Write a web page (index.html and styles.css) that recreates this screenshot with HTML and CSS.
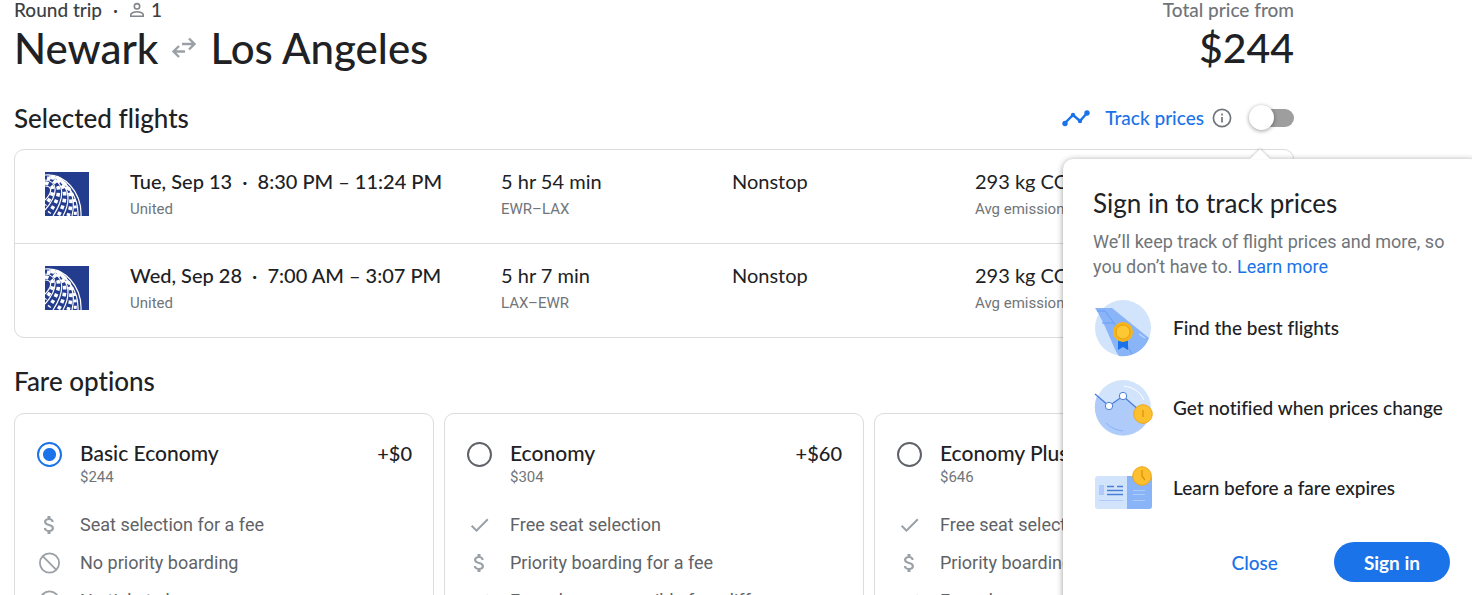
FILE: index.html
```
<!DOCTYPE html>
<html lang="en">
<head>
  <meta charset="UTF-8">
  <title>Newark to Los Angeles</title>
  <link rel="stylesheet" href="styles.css">
</head>
<body>

<!-- shared icons -->
<svg class="sprite" aria-hidden="true">
  <symbol id="dollar" viewBox="0 0 24 24"><path d="M11.8 10.9c-2.27-.59-3-1.2-3-2.15 0-1.09 1.01-1.85 2.7-1.85 1.78 0 2.44.85 2.5 2.1h2.21c-.07-1.72-1.12-3.3-3.21-3.81V3h-3v2.16c-1.94.42-3.5 1.68-3.5 3.61 0 2.31 1.91 3.46 4.7 4.13 2.5.6 3 1.48 3 2.41 0 .69-.49 1.79-2.7 1.79-2.06 0-2.87-.92-2.98-2.1h-2.2c.12 2.19 1.76 3.42 3.68 3.83V21h3v-2.15c1.95-.37 3.5-1.5 3.5-3.55 0-2.84-2.43-3.81-4.7-4.4z"/></symbol>
  <symbol id="check" viewBox="0 0 24 24"><path d="M9 16.17L4.83 12l-1.42 1.41L9 19 21 7l-1.41-1.41z"/></symbol>
  <symbol id="block" viewBox="0 0 24 24"><path d="M5.200 5.200l13.600 13.600M21.600 12a9.600 9.600 0 1 1-19.200 0 9.600 9.600 0 0 1 19.200 0z" fill="none" stroke="#9aa0a6" stroke-width="1.8"/></symbol>
  <symbol id="united" viewBox="0 0 44 44">
    <rect width="44" height="44" fill="#233c8e"/>
    <g fill="none" stroke="#fff" stroke-width="1.2">
      <path d="M0 3C19 1 37 20 36 44"/>
      <path d="M6 4C22 9 34 25 33 44"/>
      <path d="M13 5C26 14 31 27 27 44"/>
      <path d="M8 4C22 11 28 25 18 44"/>
      <path d="M4 4C18 9 22 23 8 44"/>
      <path d="M0 8C13 9 14 22 0 38"/>
      <path d="M0 14C7 14 8 20 0 28"/>
    </g>
    <g fill="none" stroke="#fff" stroke-width="3.600" stroke-dasharray="3.600 3.400">
      <path d="M0 11C10 12 11 21 0 33"/>
      <path d="M2 6C16 9 18 22 4 41"/>
      <path d="M6 5C20 10 25 24 13 44"/>
      <path d="M11 5C24 13 30 26 23 44"/>
    </g>
    <path d="M14 7C26 15 32 28 30 44" fill="none" stroke="#fff" stroke-width="3" stroke-dasharray="3 3.400"/>
  </symbol>
</svg>

<main class="page">

  <header class="trip">
    <div>
      <p class="trip-type">Round trip <span class="dot">·</span>
        <svg class="person" viewBox="0 0 16 16" fill="none" stroke="#80868b" stroke-width="1.6"><circle cx="8" cy="4.3" r="2.7"/><path d="M1.8 14.2v-1.6c0-1.9 4-2.9 6.2-2.9s6.2 1 6.2 2.9v1.6z"/></svg>
        <span>1</span></p>
      <h1>Newark
        <svg class="arrows" viewBox="0 0 26 22" fill="none" stroke="#9aa0a6" stroke-width="2.400"><path d="M11 7h13M18 1.500l5.500 5.500-5.500 5.500M14 14.500H2M8 9l-5.500 5.500L8 20"/></svg>
        Los Angeles</h1>
    </div>
    <div class="total">
      <p>Total price from</p>
      <strong>$244</strong>
    </div>
  </header>

  <div class="section-head">
    <h2>Selected flights</h2>
    <div class="track">
      <svg class="trend" viewBox="0 0 28 18" fill="none" stroke="#1a73e8" stroke-width="2.4"><path d="M3 14l8-8 7 6 7-8"/><g fill="#1a73e8" stroke="none"><circle cx="3" cy="14.5" r="2.7"/><circle cx="11" cy="6" r="2.2"/><circle cx="18" cy="12" r="2.2"/><circle cx="25" cy="4" r="2.7"/></g></svg>
      <label for="track">Track prices</label>
      <svg class="info" viewBox="0 0 20 20" fill="none" stroke="#70757a" stroke-width="1.7"><circle cx="10" cy="10" r="8.6"/><path d="M10 9v5.4M10 5.6v1.8"/></svg>
      <input type="checkbox" id="track" class="switch">

      <div class="popup" role="dialog" aria-labelledby="popup-title">
        <h3 id="popup-title">Sign in to track prices</h3>
        <p class="popup-text">We’ll keep track of flight prices and more, so you don’t have to. <a href="#">Learn more</a></p>
        <ul class="perks">
          <li>
            <svg viewBox="0 0 60 60">
              <circle cx="30" cy="30" r="28" fill="#d2e3fc"/>
              <path d="M2 10h17l37 30a28 28 0 0 1-30 18C21 52 14 29 2 10z" fill="#8ab4f8"/>
              <path d="M4 13h8l9 12H9M21 25l18 31" fill="none" stroke="#669df6"/>
              <path d="M46 36l6 4" stroke="#d2e3fc"/>
              <path d="M25 41h10v11l-5-3-5 3z" fill="#1a73e8"/>
              <circle cx="30" cy="34" r="10" fill="#f5b51e"/><circle cx="30" cy="34" r="7" fill="#fcc934" stroke="#ea9f10"/>
            </svg>
            Find the best flights
          </li>
          <li>
            <svg viewBox="0 0 60 60">
              <circle cx="30" cy="30" r="28" fill="#d2e3fc"/>
              <path d="M4 18l12 10 14-10 26 22A28 28 0 1 1 4 18z" fill="#aecbfa"/>
              <path d="M31 8q15 2 20 14" fill="none" stroke="#fff"/><path d="M13 45q7 7 17 8" fill="none" stroke="#8ab4f8"/>
              <path d="M2 16l14 12 14-10 17 15" fill="none" stroke="#4a7fd6" stroke-width="1.3"/>
              <circle cx="16" cy="28" r="3.7" fill="#fff" stroke="#4a7fd6"/><circle cx="30" cy="18" r="3.7" fill="#fff" stroke="#4a7fd6"/>
              <circle cx="50" cy="36" r="9.3" fill="#fcc02e" stroke="#eda51a"/><path d="M50 32v7" stroke="#e58f0b" stroke-width="1.3"/>
            </svg>
            Get notified when prices change
          </li>
          <li>
            <svg viewBox="0 0 60 60">
              <rect x="2" y="18" width="57" height="33" rx="3" fill="#d2e3fc"/>
              <path d="M34 18h22a3 3 0 0 1 3 3v27a3 3 0 0 1-3 3H34z" fill="#8ab4f8"/>
              <path d="M6 27h5v10H6z" fill="#aecbfa"/>
              <path d="M14 28.500h7M24 28.500h6M14 32.500h16M14 36.500h16" stroke="#4a7fd6" stroke-width="1.3"/>
              <path d="M6 42.500h24M40 32.500h12M40 36.500h12M40 42.500h12" stroke="#aecbfa"/>
              <circle cx="49" cy="18" r="9.300" fill="#fcc02e" stroke="#eda51a"/><path d="M49 12v6l3 4" fill="none" stroke="#e58f0b" stroke-width="1.3"/>
            </svg>
            Learn before a fare expires
          </li>
        </ul>
        <div class="popup-actions">
          <button type="button" class="btn-close">Close</button>
          <button type="button" class="btn-signin">Sign in</button>
        </div>
      </div>
    </div>
  </div>

  <section class="flights">
    <article class="flight">
      <svg class="logo" role="img" aria-label="United"><use href="#united"/></svg>
      <div><p class="main">Tue, Sep 13 <span class="dot">·</span> 8:30 PM – 11:24 PM</p><p class="sub">United</p></div>
      <div><p>5 hr 54 min</p><p class="sub">EWR–LAX</p></div>
      <div><p>Nonstop</p></div>
      <div><p>293 kg CO2</p><p class="sub">Avg emissions</p></div>
    </article>
    <article class="flight">
      <svg class="logo" role="img" aria-label="United"><use href="#united"/></svg>
      <div><p class="main">Wed, Sep 28 <span class="dot">·</span> 7:00 AM – 3:07 PM</p><p class="sub">United</p></div>
      <div><p>5 hr 7 min</p><p class="sub">LAX–EWR</p></div>
      <div><p>Nonstop</p></div>
      <div><p>293 kg CO2</p><p class="sub">Avg emissions</p></div>
    </article>
  </section>

  <h2 class="fares-title">Fare options</h2>

  <section class="fares">
    <article class="fare">
      <div class="fare-head">
        <input type="radio" name="fare" id="basic" checked>
        <div><label for="basic">Basic Economy</label><p class="sub">$244</p></div>
        <span class="extra">+$0</span>
      </div>
      <ul class="features">
        <li><svg><use href="#dollar"/></svg>Seat selection for a fee</li>
        <li><svg><use href="#block"/></svg>No priority boarding</li>
        <li><svg><use href="#block"/></svg>No ticket changes</li>
      </ul>
    </article>
    <article class="fare">
      <div class="fare-head">
        <input type="radio" name="fare" id="economy">
        <div><label for="economy">Economy</label><p class="sub">$304</p></div>
        <span class="extra">+$60</span>
      </div>
      <ul class="features">
        <li><svg><use href="#check"/></svg>Free seat selection</li>
        <li><svg><use href="#dollar"/></svg>Priority boarding for a fee</li>
        <li><svg><use href="#check"/></svg>Free change, possible fare difference</li>
      </ul>
    </article>
    <article class="fare">
      <div class="fare-head">
        <input type="radio" name="fare" id="plus">
        <div><label for="plus">Economy Plus</label><p class="sub">$646</p></div>
        <span class="extra">+$402</span>
      </div>
      <ul class="features">
        <li><svg><use href="#check"/></svg>Free seat selection</li>
        <li><svg><use href="#dollar"/></svg>Priority boarding for a fee</li>
        <li><svg><use href="#check"/></svg>Free change, possible fare difference</li>
      </ul>
    </article>
  </section>

</main>
</body>
</html>
```
FILE: styles.css
```
* {
  box-sizing: border-box;
}

html {
  overflow: hidden;
}

body {
  margin: 0;
  background: #fff;
  color: #202124;
  font-family: Lato, "Open Sans", sans-serif;
  font-size: 20px;
  line-height: 24px;
  font-variant-ligatures: none;
}

h1, h2, h3, p, ul {
  margin: 0;
  padding: 0;
  font-weight: 500;
}

ul {
  list-style: none;
}

.sprite {
  display: none;
}

.page {
  max-width: 1294px;
  padding-left: 14px;
}

/* Trip title and price */
.trip {
  display: flex;
  justify-content: space-between;
}

.trip-type {
  display: flex;
  align-items: center;
  gap: 6px;
  font-size: 19px;
  line-height: 20px;
  color: #3c4043;
}

.person {
  width: 16px;
  height: 16px;
}

h1 {
  display: flex;
  align-items: center;
  gap: 13px;
  font-size: 42px;
  line-height: 56px;
}

.arrows {
  width: 26px;
  height: 22px;
}

.total {
  text-align: right;
}

.total p {
  font-size: 19px;
  line-height: 20px;
  color: #70757a;
}

.total strong {
  font-size: 41px;
  font-weight: 500;
  line-height: 56px;
}

/* Section titles */
h2 {
  font-size: 26px;
  line-height: 32px;
}

.section-head {
  display: flex;
  justify-content: space-between;
  align-items: center;
  margin: 26px 0 15px;
}

.track {
  position: relative;
  display: flex;
  align-items: center;
  color: #1a73e8;
  font-size: 19px;
  font-weight: 500;
}

.trend {
  width: 28px;
  height: 18px;
  margin-right: 15px;
}

.info {
  width: 20px;
  height: 20px;
  margin: 0 18px 0 8px;
}

.switch {
  appearance: none;
  width: 44px;
  height: 18px;
  margin: 0;
  border-radius: 9px;
  background: #9e9e9e;
}

.switch::before {
  content: "";
  display: block;
  width: 25px;
  height: 25px;
  margin: -4px 0 0 -1px;
  border-radius: 50%;
  background: #fff;
  box-shadow: 0 1px 4px rgba(0,0,0,0.4);
}

/* Sign in popup */
.popup {
  position: absolute;
  top: 53px;
  right: -186px;
  z-index: 2;
  width: 417px;
  padding: 29px 30px;
  border-radius: 10px;
  background: #fff;
  color: #202124;
  font-weight: 400;
  box-shadow: 0 1px 6px rgba(0,0,0,0.4);
}

.popup::before {
  content: "";
  position: absolute;
  top: -10px;
  left: 187px;
  border: 10px solid transparent;
  border-top: 0;
  border-bottom-color: #fff;
  filter: drop-shadow(0 -1px 1px rgba(0,0,0,0.2));
}

.popup h3 {
  font-size: 26px;
  font-weight: 400;
  line-height: 30px;
}

.popup-text {
  margin: 11px 0 19px;
  color: #70757a;
  font: 18px/25px Roboto, sans-serif;
}

.popup a {
  color: #1a73e8;
  text-decoration: none;
}

.perks {
  display: grid;
  gap: 20px;
}

.perks li {
  display: flex;
  align-items: center;
  gap: 20px;
  font-size: 19px;
}

.perks svg {
  width: 60px;
  height: 60px;
}

.popup-actions {
  display: flex;
  justify-content: flex-end;
  gap: 26px;
  margin-top: 24px;
}

button {
  height: 40px;
  padding: 0 30px;
  border: none;
  border-radius: 20px;
  cursor: pointer;
  font: 500 19px Lato, "Open Sans", sans-serif;
}

.btn-close {
  background: none;
  color: #1a73e8;
}

.btn-signin {
  background: #1a73e8;
  color: #fff;
  font-weight: 700;
}

/* Flights */
.flights {
  border: 1px solid #dadce0;
  border-radius: 10px;
}

.flight {
  display: grid;
  grid-template-columns: 85px 371fr 231fr 243fr 318fr;
  padding: 18px 0 18px 30px;
}

.flight + .flight {
  border-top: 1px solid #dadce0;
}

.flight p {
  font-weight: 400;
  line-height: 26px;
}

.flight .main {
  font-weight: 500;
}

.logo {
  width: 44px;
  height: 44px;
  margin-top: 4px;
}

.dot {
  margin: 0 5px;
}

.sub, .flight .sub {
  color: #70757a;
  font: 15px/31px Roboto, sans-serif;
}

/* Fares */
.fares-title {
  margin: 27px 0 16px;
}

.fares {
  display: grid;
  grid-template-columns: repeat(3, 1fr);
  gap: 10px;
}

.fare {
  padding: 24px 21px;
  border: 1px solid #dadce0;
  border-radius: 10px;
}

.fare-head {
  display: grid;
  grid-template-columns: 44px 1fr auto;
  line-height: 30px;
  font-weight: 500;
}

.fare-head label {
  font-size: 21px;
}

.fare-head .sub {
  line-height: 18px;
}

input[type=radio] {
  appearance: none;
  width: 25px;
  height: 25px;
  margin: 4px 0 0 1px;
  border: 2px solid #5f6368;
  border-radius: 50%;
}

input[type=radio]:checked {
  border-color: #1a73e8;
  background: radial-gradient(#1a73e8 6px, transparent 7px);
}

.features {
  display: grid;
  gap: 14px;
  margin-top: 27px;
}

.features li {
  display: flex;
  align-items: center;
  gap: 17px;
  color: #5f6368;
  font: 18px/24px Roboto, sans-serif;
}

.features svg {
  width: 27px;
  height: 24px;
  fill: #9aa0a6;
}
```
